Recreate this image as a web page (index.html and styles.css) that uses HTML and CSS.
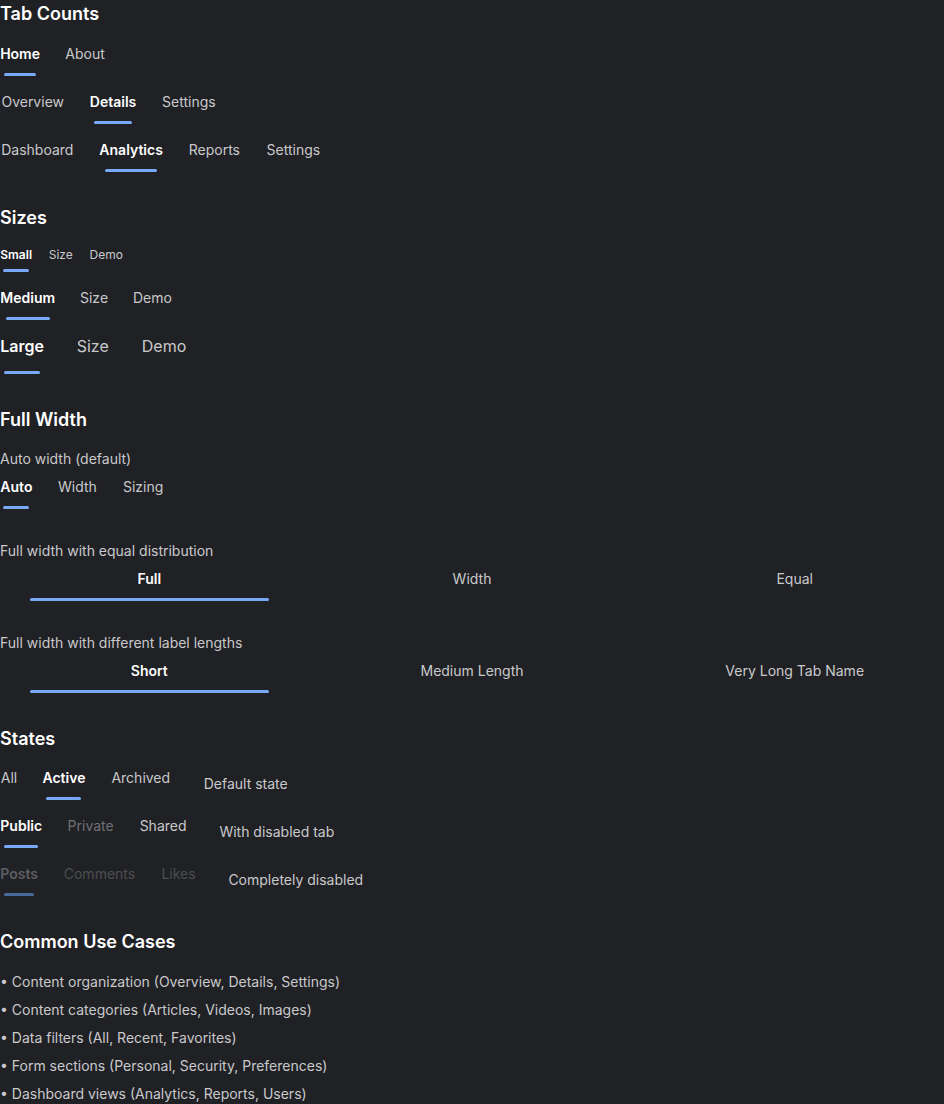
FILE: index.html
```html
<!DOCTYPE html>
<html lang="en">
<head>
<meta charset="utf-8">
<title>Tabs</title>
<link rel="stylesheet" href="styles.css">
</head>
<body>
<section class="section">
  <h2 class="heading first">Tab Counts</h2>
  <div class="stack">
    <div class="tabs">
      <div class="tab active" data-label="Home">Home</div>
      <div class="tab" data-label="About">About</div>
    </div>
    <div class="tabs">
      <div class="tab" data-label="Overview">Overview</div>
      <div class="tab active" data-label="Details">Details</div>
      <div class="tab" data-label="Settings">Settings</div>
    </div>
    <div class="tabs">
      <div class="tab" data-label="Dashboard">Dashboard</div>
      <div class="tab active" data-label="Analytics">Analytics</div>
      <div class="tab" data-label="Reports">Reports</div>
      <div class="tab" data-label="Settings">Settings</div>
    </div>
  </div>
</section>

<section class="section">
  <h2 class="heading">Sizes</h2>
  <div class="stack">
    <div class="tabs sm">
      <div class="tab active" data-label="Small">Small</div>
      <div class="tab" data-label="Size">Size</div>
      <div class="tab" data-label="Demo">Demo</div>
    </div>
    <div class="tabs">
      <div class="tab active" data-label="Medium">Medium</div>
      <div class="tab" data-label="Size">Size</div>
      <div class="tab" data-label="Demo">Demo</div>
    </div>
    <div class="tabs lg">
      <div class="tab active" data-label="Large">Large</div>
      <div class="tab" data-label="Size">Size</div>
      <div class="tab" data-label="Demo">Demo</div>
    </div>
  </div>
</section>

<section class="section">
  <h2 class="heading">Full Width</h2>
  <div class="groups">
    <div class="group">
      <p class="desc">Auto width (default)</p>
      <div class="tabs">
        <div class="tab active" data-label="Auto">Auto</div>
        <div class="tab" data-label="Width">Width</div>
        <div class="tab" data-label="Sizing">Sizing</div>
      </div>
    </div>
    <div class="group">
      <p class="desc">Full width with equal distribution</p>
      <div class="tabs full">
        <div class="tab active" data-label="Full">Full</div>
        <div class="tab" data-label="Width">Width</div>
        <div class="tab" data-label="Equal">Equal</div>
      </div>
    </div>
    <div class="group">
      <p class="desc">Full width with different label lengths</p>
      <div class="tabs full">
        <div class="tab active" data-label="Short">Short</div>
        <div class="tab" data-label="Medium Length">Medium Length</div>
        <div class="tab" data-label="Very Long Tab Name">Very Long Tab Name</div>
      </div>
    </div>
  </div>
</section>

<section class="section">
  <h2 class="heading">States</h2>
  <div class="stack">
    <div class="state-row">
      <div class="tabs">
        <div class="tab" data-label="All">All</div>
        <div class="tab active" data-label="Active">Active</div>
        <div class="tab" data-label="Archived">Archived</div>
      </div>
      <span class="state-label">Default state</span>
    </div>
    <div class="state-row">
      <div class="tabs">
        <div class="tab active" data-label="Public">Public</div>
        <div class="tab disabled" data-label="Private">Private</div>
        <div class="tab" data-label="Shared">Shared</div>
      </div>
      <span class="state-label">With disabled tab</span>
    </div>
    <div class="state-row">
      <div class="tabs all-disabled">
        <div class="tab active" data-label="Posts">Posts</div>
        <div class="tab" data-label="Comments">Comments</div>
        <div class="tab" data-label="Likes">Likes</div>
      </div>
      <span class="state-label">Completely disabled</span>
    </div>
  </div>
</section>

<section class="section">
  <h2 class="heading last">Common Use Cases</h2>
  <ul class="uses-list">
    <li>• Content organization (Overview, Details, Settings)</li>
    <li>• Content categories (Articles, Videos, Images)</li>
    <li>• Data filters (All, Recent, Favorites)</li>
    <li>• Form sections (Personal, Security, Preferences)</li>
    <li>• Dashboard views (Analytics, Reports, Users)</li>
  </ul>
</section>
</body>
</html>
```

FILE: styles.css
```css
html, body {
  margin: 0;
  padding: 0;
  background: #202125;
}

body {
  font-family: Inter, "Noto Sans", "Liberation Sans", sans-serif;
  color: #c9c9cb;
  font-size: 14px;
  line-height: 20px;
}

.section + .section {
  margin-top: 32px;
}

.heading {
  margin: 0 0 15px;
  font-size: 18px;
  line-height: 28px;
  font-weight: 600;
  color: #ffffff;
}

.heading.first,
.heading.last {
  margin-bottom: 16px;
}

.stack {
  display: flex;
  flex-direction: column;
  gap: 16px;
}

.groups {
  display: flex;
  flex-direction: column;
  gap: 32px;
}

.desc {
  margin: 0 0 8px;
  font-size: 14px;
  line-height: 20px;
  color: #c9c9cb;
}

.tabs {
  display: flex;
  gap: 24px;
}

.tab {
  position: relative;
  display: flex;
  flex-direction: column;
  align-items: center;
  font-size: 14px;
  line-height: 20px;
  padding-bottom: 12px;
  color: #c9c9cb;
  white-space: nowrap;
}

/* reserve the bold width so labels don't shift */
.tab::before {
  content: attr(data-label);
  order: 2;
  height: 0;
  overflow: hidden;
  visibility: hidden;
  font-weight: 700;
}

.tab.active {
  color: #ffffff;
  font-weight: 600;
}

.tab.active::after {
  content: "";
  position: absolute;
  left: 10%;
  width: 80%;
  bottom: 0;
  height: 3px;
  border-radius: 2px;
  background: #79a8f7;
}

.tabs.sm {
  gap: 16px;
}

.tabs.sm .tab {
  font-size: 12px;
  line-height: 16px;
  padding-bottom: 9px;
}

.tabs.lg {
  gap: 32px;
}

.tabs.lg .tab {
  font-size: 16px;
  line-height: 20px;
  padding-bottom: 18px;
}

.tabs.full .tab {
  flex: 1 1 0;
}

.tab.disabled {
  color: #6f7073;
}

.tabs.all-disabled .tab {
  color: #4d4e52;
}

.tabs.all-disabled .tab.active {
  color: #5d5e63;
}

.tabs.all-disabled .tab.active::after {
  background: #4a6a9c;
}

.state-row {
  display: flex;
  align-items: center;
  gap: 32px;
}

.state-label {
  font-size: 14px;
  line-height: 20px;
  color: #c9c9cb;
}

.uses-list {
  list-style: none;
  margin: 0;
  padding: 0;
  display: flex;
  flex-direction: column;
  gap: 8px;
}

.uses-list li {
  font-size: 14px;
  line-height: 20px;
  color: #c9c9cb;
}
```
